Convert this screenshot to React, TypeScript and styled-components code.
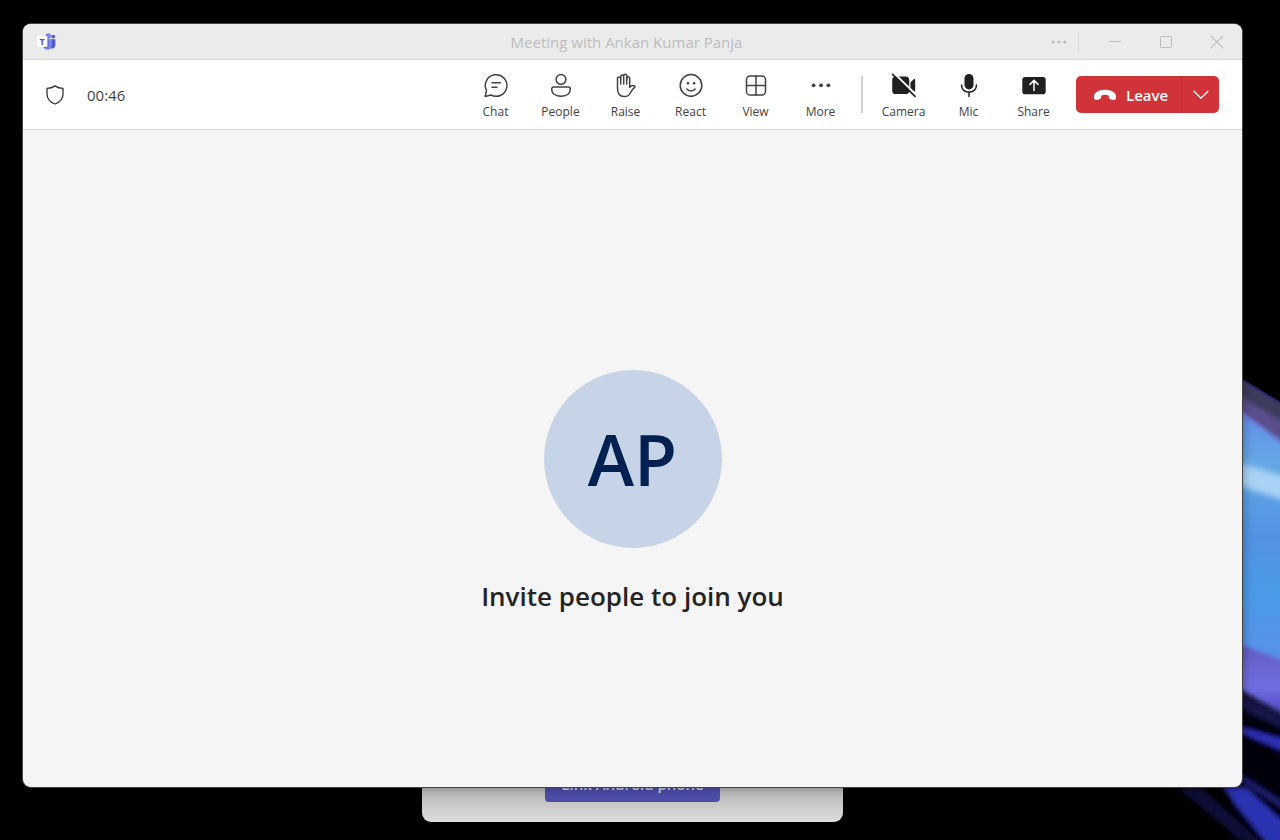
import React from "react";
import styled, { createGlobalStyle } from "styled-components";

const GlobalStyle = createGlobalStyle`
  *, *::before, *::after { box-sizing: border-box; }
  body {
    margin: 0;
    background: #000;
    color: #242424;
    font-family: "Open Sans", "Noto Sans", sans-serif;
  }
  button { font: inherit; color: inherit; border: 0; padding: 0; background: none; cursor: pointer; }
  svg { display: block; flex: none; }
`;

const Desktop = styled.div`
  position: relative;
  display: flex;
  min-height: 100vh;
  padding: 24px 38px 53px 23px;
  overflow: hidden;
`;

const Wallpaper = styled.svg`
  position: absolute;
  right: 0;
  bottom: 0;
`;

const PhoneWindow = styled.aside`
  position: absolute;
  left: calc(50% - 218px);
  bottom: 18px;
  width: 421px;
  height: 100px;
  padding-bottom: 20px;
  display: flex;
  justify-content: center;
  align-items: flex-end;
  border-radius: 9px;
  background: linear-gradient(#b4b4b4 64%, #dcdcdc);
`;

const LinkButton = styled.button`
  width: 175px;
  height: 36px;
  border-radius: 4px;
  background: #4c4da6;
  color: #d4d4e4;
  font-size: 15px;
  font-weight: 600;
  line-height: 36px;
  white-space: nowrap;
`;

const MeetingWindow = styled.main`
  position: relative;
  flex: 1;
  min-width: 0;
  display: flex;
  flex-direction: column;
  border-radius: 8px;
  overflow: hidden;
  background: #f5f5f5;
  box-shadow: 0 0 0 1px #444, 0 0 12px rgba(0, 0, 0, 0.4);
`;

const TitleBar = styled.header`
  display: grid;
  grid-template-columns: 1fr auto 1fr;
  align-items: center;
  height: 36px;
  padding: 0 12px 0 0;
  background: #ebebeb;
  border-bottom: 1px solid #d6d6d6;
`;

const LogoSlot = styled.div`
  padding-left: 14px;
`;

const Title = styled.h1`
  margin: 0;
  font-size: 15px;
  line-height: 20px;
  font-weight: 400;
  color: #bdbdbd;
`;

const WindowControls = styled.div`
  display: flex;
  align-items: center;
  justify-content: flex-end;
  gap: 25px;
`;

const MenuGroup = styled.div`
  display: flex;
  align-items: center;
  gap: 6px;
  margin-right: -2px;
`;

const ControlButton = styled.button`
  display: flex;
  align-items: center;
  justify-content: center;
  width: 26px;
  height: 26px;
  color: #bcbcbc;
`;

const ControlRule = styled.span`
  width: 1px;
  height: 22px;
  background: #dadada;
`;

const Toolbar = styled.div`
  display: flex;
  align-items: center;
  justify-content: space-between;
  height: 70px;
  padding: 0 23px;
  background: #fff;
  border-bottom: 1px solid #d4d4d4;
`;

const Status = styled.div`
  display: flex;
  align-items: center;
  gap: 23px;
`;

const Timer = styled.time`
  font-size: 15px;
  line-height: 20px;
  color: #424242;
`;

const Actions = styled.div`
  display: flex;
  align-items: center;
`;

const ToolButton = styled.button<{ $solid?: boolean }>`
  display: flex;
  flex-direction: column;
  align-items: center;
  gap: 5px;
  width: 65px;
  padding-top: 4px;
  color: ${(p) => (p.$solid ? "#202020" : "#424242")};
`;

const ToolLabel = styled.span`
  font-size: 12px;
  line-height: 16px;
  color: #424242;
`;

const Divider = styled.span`
  width: 2px;
  height: 37px;
  margin: 0 8px;
  background: #d1d1d1;
`;

const LeaveGroup = styled.div`
  display: flex;
  height: 37px;
  margin-left: 10px;
  border-radius: 5px;
  overflow: hidden;
  background: #d13438;
  color: #fff;
`;

const LeaveButton = styled.button`
  display: flex;
  align-items: center;
  gap: 9px;
  width: 105px;
  padding-left: 17px;
  font-size: 15px;
  line-height: 20px;
  font-weight: 600;
`;

const LeaveMenu = styled.button`
  display: flex;
  align-items: center;
  justify-content: center;
  width: 38px;
  border-left: 1px solid #b92b30;
`;

const Stage = styled.section`
  flex: 1;
  display: flex;
  flex-direction: column;
  align-items: center;
  justify-content: center;
  gap: 28px;
  padding-top: 68px;
`;

const Avatar = styled.div`
  display: flex;
  align-items: center;
  justify-content: center;
  width: 178px;
  height: 178px;
  border-radius: 50%;
  background: #c7d4e8;
  color: #002050;
  font-size: 70px;
  line-height: 80px;
  font-weight: 600;
`;

const Invite = styled.h2`
  margin: 0;
  font-size: 26px;
  line-height: 40px;
  font-weight: 600;
`;

const stroke = {
  fill: "none",
  stroke: "currentColor",
  strokeWidth: 1.5,
  strokeLinecap: "round" as const,
  strokeLinejoin: "round" as const,
};

function Icon({ children }: { children: React.ReactNode }) {
  return (
    <svg width="26" height="26" viewBox="0 0 26 26" aria-hidden="true">
      {children}
    </svg>
  );
}

const icons = {
  chat: (
    <Icon>
      <g {...stroke}>
        <path d="M3.5 17.4A10.8 10.8 0 1 1 8 22L2.2 23.4Z" />
        <path d="M9 9.8h8.4M9 14.3h5" />
      </g>
    </Icon>
  ),
  people: (
    <Icon>
      <g {...stroke}>
        <circle cx="13" cy="6.4" r="4.9" />
        <path d="M5.7 14h14.6a2 2 0 0 1 2 2c0 5-4.3 7.2-9.3 7.2S3.7 21 3.7 16a2 2 0 0 1 2-2Z" />
      </g>
    </Icon>
  ),
  raise: (
    <Icon>
      <g {...stroke}>
        <path d="M7.7 11V5.6a1.6 1.6 0 0 0-3.2 0V15.6c0 5 2.4 8 6.8 8 3 0 4.7-1 6.1-3.6 1.2-2.3 2.6-4.4 4.4-5.8.6-.5.2-1.3-.6-1.6-1.6-.5-3.2.2-4.5 1.6V5.3a1.5 1.5 0 0 0-3 0V11" />
        <path d="M7.7 6V3.5a1.5 1.5 0 0 1 3 0V11M10.7 3.6v-.8a1.5 1.5 0 0 1 3.2 0V6" />
      </g>
    </Icon>
  ),
  react: (
    <Icon>
      <circle cx="13" cy="12.4" r="10.8" {...stroke} />
      <circle cx="9.9" cy="10.2" r="1.3" fill="currentColor" />
      <circle cx="16.1" cy="10.2" r="1.3" fill="currentColor" />
      <path d="M8.8 16.1c2.1 2.5 6.3 2.5 8.4 0" {...stroke} />
    </Icon>
  ),
  view: (
    <Icon>
      <g {...stroke}>
        <rect x="3.5" y="3" width="19" height="19" rx="3.6" />
        <path d="M13 3v19M3.5 12.5h19" />
      </g>
    </Icon>
  ),
  more: (
    <Icon>
      <g fill="currentColor">
        <circle cx="5.6" cy="12.3" r="1.9" />
        <circle cx="13" cy="12.3" r="1.9" />
        <circle cx="20.4" cy="12.3" r="1.9" />
      </g>
    </Icon>
  ),
  camera: (
    <Icon>
      <rect x="1.2" y="3.4" width="17" height="17.6" rx="3.6" fill="currentColor" />
      <path d="M19.4 9.6l3.3-3.3c.6-.6 1.5-.3 1.5.6v10.6c0 .9-.9 1.3-1.5.7l-3.3-2.8Z" fill="currentColor" />
      <path d="M2.6-.2L25.6 22.2" stroke="#fff" strokeWidth="2" />
      <path d="M1.6 1.3L24 23.4" {...stroke} strokeWidth={1.7} />
    </Icon>
  ),
  mic: (
    <Icon>
      <rect x="8.5" y="1" width="9" height="15.4" rx="4.5" fill="currentColor" />
      <path d="M5.6 12v.6a6.4 6.4 0 0 0 6.4 6.4h2a6.4 6.4 0 0 0 6.4-6.4V12M13 19v4.4" {...stroke} />
    </Icon>
  ),
  share: (
    <Icon>
      <rect x="1.3" y="4" width="23.4" height="17.2" rx="2.8" fill="currentColor" />
      <path d="M13 17.4V7.6M9 11.4l4-4 4 4" {...stroke} stroke="#fff" />
    </Icon>
  ),
};

const meetingTools = [
  { label: "Chat", icon: icons.chat },
  { label: "People", icon: icons.people },
  { label: "Raise", icon: icons.raise },
  { label: "React", icon: icons.react },
  { label: "View", icon: icons.view },
  { label: "More", icon: icons.more },
];

const deviceTools = [
  { label: "Camera", icon: icons.camera },
  { label: "Mic", icon: icons.mic },
  { label: "Share", icon: icons.share },
];

function TeamsLogo() {
  return (
    <svg width="19" height="18" viewBox="0 0 19 18" aria-hidden="true">
      <circle cx="16.3" cy="3.6" r="1.9" fill="#5059c9" />
      <path d="M13 6.2h5.3v6a3.4 3.4 0 0 1-4.6 3.1Z" fill="#5059c9" />
      <circle cx="11.3" cy="3" r="2.8" fill="#7b83eb" />
      <path d="M6.5 6.2h8.4v6c0 2.8-1.9 4.6-4.4 4.6-2 0-3.4-1.1-4-2.8Z" fill="#7b83eb" />
      <path d="M6.5 4h5v10.5h-5Z" fill="#4b53bc" opacity=".7" />
      <rect x="0" y="3" width="10.4" height="11" rx="1" fill="#fff" />
      <text x="5.2" y="12" textAnchor="middle" fontSize="9" fontWeight="700" fill="#4b53bc">
        T
      </text>
    </svg>
  );
}

function DesktopArt() {
  return (
    <Wallpaper width="130" height="480" viewBox="0 0 130 480" aria-hidden="true">
      <defs>
        <linearGradient id="sky" x1="0" y1="0" x2="0" y2="1">
          <stop offset="0" stopColor="#6e78e0" />
          <stop offset=".1" stopColor="#6498e6" />
          <stop offset=".22" stopColor="#65a8e6" />
          <stop offset=".36" stopColor="#5a9de4" />
          <stop offset=".5" stopColor="#5392e2" />
          <stop offset=".7" stopColor="#4b9ae8" />
          <stop offset="1" stopColor="#5a90ec" />
        </linearGradient>
        <linearGradient id="violet" x1="0" y1="0" x2="0" y2="1">
          <stop offset="0" stopColor="#6158bc" />
          <stop offset=".6" stopColor="#7070e4" />
          <stop offset="1" stopColor="#4a40b8" />
        </linearGradient>
        <filter id="soft" x="-20%" y="-20%" width="140%" height="140%">
          <feGaussianBlur stdDeviation="2" />
        </filter>
        <filter id="softer" x="-20%" y="-50%" width="140%" height="200%">
          <feGaussianBlur stdDeviation="3" />
        </filter>
      </defs>
      <path d="M80 12L140 48V90L80 45Z" fill="#3d3b5c" />
      <g filter="url(#soft)">
        <path d="M80 30L140 66V96L80 48Z" fill="#5b4d8c" />
        <path d="M80 44L140 88V310L80 285Z" fill="url(#sky)" />
        <path d="M80 280L140 303V358L80 324Z" fill="url(#violet)" />
        <path d="M80 328L140 360V376L80 342Z" fill="#12124a" />
        <path d="M80 344L140 372V480H80Z" fill="#06060f" />
        <path d="M80 364L140 381V394L80 368Z" fill="#2e2db4" />
        <path d="M72 427L96 428L140 468V490H122Z" fill="#2a31b0" />
        <path d="M92 415L140 446V454L92 422Z" fill="#1d1a6c" />
        <path d="M28 428L52 428L112 484H96Z" fill="#100c38" />
      </g>
      <path d="M80 100L140 118V142L80 123Z" fill="#a9d3f4" filter="url(#softer)" />
      <path d="M86 16L130 43" stroke="#2f2478" strokeWidth="2" />
      <path d="M93 54L130 83" stroke="#6f78e8" strokeWidth="2" opacity=".7" />
    </Wallpaper>
  );
}

export default function App() {
  return (
    <Desktop>
      <GlobalStyle />
      <DesktopArt />
      <PhoneWindow>
        <LinkButton type="button">Link Android phone</LinkButton>
      </PhoneWindow>
      <MeetingWindow>
        <TitleBar>
          <LogoSlot>
            <TeamsLogo />
          </LogoSlot>
          <Title>Meeting with Ankan Kumar Panja</Title>
          <WindowControls>
            <MenuGroup>
              <ControlButton type="button" aria-label="Window menu">
                <svg width="16" height="4" viewBox="0 0 16 4" fill="currentColor">
                  <circle cx="2.2" cy="2" r="1.5" />
                  <circle cx="8" cy="2" r="1.5" />
                  <circle cx="13.8" cy="2" r="1.5" />
                </svg>
              </ControlButton>
              <ControlRule />
            </MenuGroup>
            <ControlButton type="button" aria-label="Minimize">
              <svg width="12" height="12" viewBox="0 0 12 12" stroke="currentColor">
                <path d="M0 5.5h12" />
              </svg>
            </ControlButton>
            <ControlButton type="button" aria-label="Maximize">
              <svg width="12" height="12" viewBox="0 0 12 12" stroke="currentColor" fill="none">
                <rect x=".5" y=".5" width="11" height="11" rx="1" />
              </svg>
            </ControlButton>
            <ControlButton type="button" aria-label="Close">
              <svg width="14" height="14" viewBox="0 0 14 14" stroke="currentColor" strokeWidth="1.2">
                <path d="M.8.8L13.2 13.2M13.2.8L.8 13.2" />
              </svg>
            </ControlButton>
          </WindowControls>
        </TitleBar>
        <Toolbar>
          <Status>
            <svg width="18" height="20" viewBox="0 0 18 20" role="img" aria-label="Secure meeting">
              <path
                d="M9 .9C11.2 2.5 13.8 3.3 17 3.4V9c0 4.8-2.6 8-8 10-5.4-2-8-5.2-8-10V3.4C4.2 3.3 6.8 2.5 9 .9Z"
                fill="none"
                stroke="#303030"
                strokeWidth="1.3"
                strokeLinejoin="round"
              />
            </svg>
            <Timer>00:46</Timer>
          </Status>
          <Actions>
            {meetingTools.map((t) => (
              <ToolButton type="button" key={t.label}>
                {t.icon}
                <ToolLabel>{t.label}</ToolLabel>
              </ToolButton>
            ))}
            <Divider />
            {deviceTools.map((t) => (
              <ToolButton type="button" key={t.label} $solid>
                {t.icon}
                <ToolLabel>{t.label}</ToolLabel>
              </ToolButton>
            ))}
            <LeaveGroup>
              <LeaveButton type="button">
                <svg width="24" height="12" viewBox="0 0 24 12" fill="currentColor" aria-hidden="true">
                  <path d="M12 .8c4.6 0 8.4 1.5 10.2 4 .9 1.2 1 2.7.7 4.4-.2 1.2-1.2 1.9-2.4 1.7l-2.6-.4c-1-.2-1.7-.9-1.9-1.9l-.4-2.1C14.4 6 13.2 5.8 12 5.8s-2.4.2-3.6.7L8 8.6c-.2 1-.9 1.7-1.9 1.9l-2.6.4c-1.2.2-2.2-.5-2.4-1.7-.3-1.7-.2-3.2.7-4.4C3.6 2.3 7.4.8 12 .8Z" />
                </svg>
                Leave
              </LeaveButton>
              <LeaveMenu type="button" aria-label="Leave options">
                <svg width="16" height="10" viewBox="0 0 16 10" {...stroke} strokeWidth={1.3}>
                  <path d="M1 1.2l7 7 7-7" />
                </svg>
              </LeaveMenu>
            </LeaveGroup>
          </Actions>
        </Toolbar>
        <Stage>
          <Avatar>AP</Avatar>
          <Invite>Invite people to join you</Invite>
        </Stage>
      </MeetingWindow>
    </Desktop>
  );
}
